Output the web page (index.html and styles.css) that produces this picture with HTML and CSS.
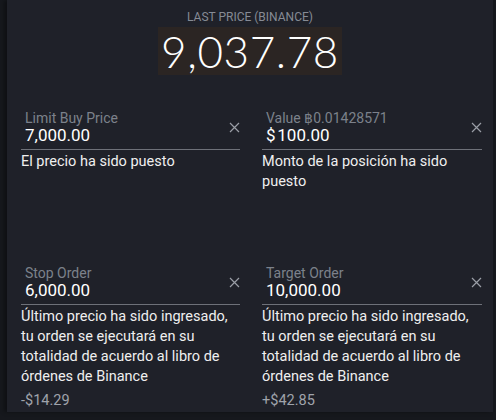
FILE: index.html
```html
<!DOCTYPE html>
<html lang="es">
<head>
    <meta charset="UTF-8">
    <meta name="viewport" content="width=device-width, initial-scale=1.0">
    <title>Orden</title>
    <link rel="stylesheet" href="styles.css">
</head>
<body>
    <div class="panel">
        <div class="last-price">
            <div class="last-label">LAST PRICE (BINANCE)</div>
            <div class="last-value">9,037.78</div>
        </div>

        <div class="fields">
            <div class="field">
                <div class="field-box">
                    <div class="field-text">
                        <div class="field-label">Limit Buy Price</div>
                        <div class="field-value">7,000.00</div>
                    </div>
                    <svg class="clear" width="11" height="11" viewBox="0 0 11 11"><path d="M1 1L10 10M10 1L1 10"/></svg>
                </div>
                <p class="helper">El precio ha sido puesto</p>
            </div>

            <div class="field">
                <div class="field-box">
                    <div class="field-text">
                        <div class="field-label">Value &#x0E3F;0.01428571</div>
                        <div class="field-value">$&#8202;100.00</div>
                    </div>
                    <svg class="clear" width="11" height="11" viewBox="0 0 11 11"><path d="M1 1L10 10M10 1L1 10"/></svg>
                </div>
                <p class="helper">Monto de la posición ha sido puesto</p>
            </div>

            <div class="field">
                <div class="field-box">
                    <div class="field-text">
                        <div class="field-label">Stop Order</div>
                        <div class="field-value">6,000.00</div>
                    </div>
                    <svg class="clear" width="11" height="11" viewBox="0 0 11 11"><path d="M1 1L10 10M10 1L1 10"/></svg>
                </div>
                <p class="helper">Último precio ha sido ingresado, tu orden se ejecutará en su totalidad de acuerdo al libro de órdenes de Binance</p>
                <div class="delta">-$14.29</div>
            </div>

            <div class="field">
                <div class="field-box">
                    <div class="field-text">
                        <div class="field-label">Target Order</div>
                        <div class="field-value">10,000.00</div>
                    </div>
                    <svg class="clear" width="11" height="11" viewBox="0 0 11 11"><path d="M1 1L10 10M10 1L1 10"/></svg>
                </div>
                <p class="helper">Último precio ha sido ingresado, tu orden se ejecutará en su totalidad de acuerdo al libro de órdenes de Binance</p>
                <div class="delta">+$42.85</div>
            </div>
        </div>
    </div>
</body>
</html>
```

FILE: styles.css
```css
body {
    margin: 0;
    padding: 0;
    background: #16181d;
    font-family: Roboto, "Open Sans", sans-serif;
    color: #ececec;
    height: 420px;
    overflow: hidden;
}

.panel {
    margin-left: 7px;
    width: 486px;
    height: 412px;
    background: #1f2129;
    box-shadow: -3px 0 4px rgba(0, 0, 0, 0.35);
}

.last-price {
    display: flex;
    flex-direction: column;
    align-items: center;
    padding-top: 10px;
}

.last-label {
    font-size: 12px;
    color: #868b95;
    line-height: 14px;
}

.last-value {
    margin-top: 3px;
    background: #2b2523;
    color: #ffffff;
    font-family: Lato, sans-serif;
    font-size: 44px;
    font-weight: 300;
    line-height: 48px;
    padding: 0 3px;
    letter-spacing: 0.6px;
}

.fields {
    display: grid;
    grid-template-columns: 219px 220px;
    column-gap: 22px;
    padding: 35px 0 0 14px;
}

.field {
    height: 155px;
}

.field-box {
    display: flex;
    align-items: center;
    border-bottom: 1px solid #6e7179;
    padding: 0 0 4px 4px;
}

.field-text {
    flex: 1;
}

.field-label {
    font-size: 14px;
    color: #7c818b;
    line-height: 16px;
}

.field-value {
    font-size: 17px;
    color: #ffffff;
    line-height: 19px;
}

.clear {
    stroke: #9a9ea6;
    stroke-width: 1.2;
    fill: none;
    margin: 0 0 0 0;
}

.helper {
    margin: 2px 0 0 0;
    font-size: 14.5px;
    line-height: 20px;
    color: #efefef;
}

.delta {
    margin-top: 4px;
    font-size: 14.5px;
    line-height: 20px;
    color: #9fa3ab;
}
```
